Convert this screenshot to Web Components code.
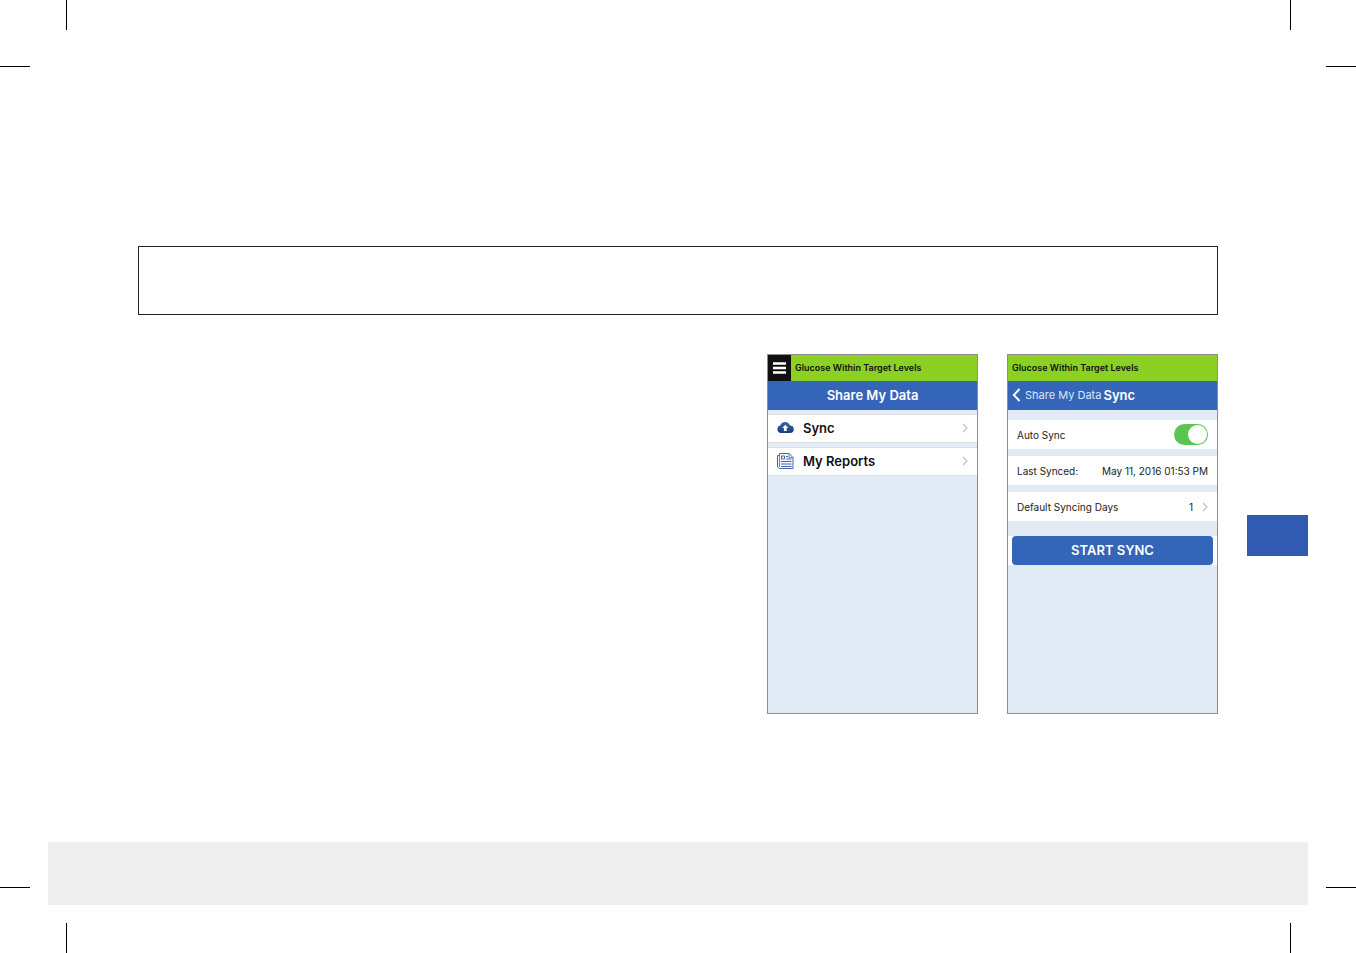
<!DOCTYPE html>
<html lang="en">
<head>
<meta charset="utf-8">
<meta name="viewport" content="width=device-width, initial-scale=1">
<title>Share My Data – Sync</title>
<style>
body { margin: 0; background: #fff; color: #111; font-family: Inter, "Liberation Sans", sans-serif;
  --blue: #3465b8; --green: #8bd023; --pale: #e2eaf5; }
</style>
</head>
<body>
<manual-page>
  <note-box></note-box>
  <figure-row>
    <phone-screen>
      <status-bar menu>Glucose Within Target Levels</status-bar>
      <nav-bar heading="Share My Data"></nav-bar>
      <menu-list>
        <menu-row icon="cloud">Sync</menu-row>
        <menu-row icon="report">My Reports</menu-row>
      </menu-list>
    </phone-screen>
    <phone-screen>
      <status-bar>Glucose Within Target Levels</status-bar>
      <nav-bar heading="Sync" back="Share My Data"></nav-bar>
      <sync-form></sync-form>
    </phone-screen>
    <chapter-tab></chapter-tab>
  </figure-row>
  <page-footer slot="footer"></page-footer>
</manual-page>
<script>
const define = (name, css, html) => customElements.define(name, class extends HTMLElement {
  constructor() { super(); this.attachShadow({ mode: 'open' }); }
  connectedCallback() {
    this.shadowRoot.innerHTML = `<style>*{box-sizing:border-box}:host{display:block;box-sizing:border-box}${css}</style>` +
      (typeof html === 'function' ? html(this) : html);
  }
});
const chevron = '<svg class="chev" width="6" height="10" viewBox="0 0 6 10" fill="none" stroke="#bfc1c6" stroke-width="1.2" aria-hidden="true"><path d="M1 1l4 4-4 4"/></svg>';
const icons = {
  cloud: `<svg width="17" height="13" viewBox="0 0 17 13" aria-hidden="true"><defs><linearGradient id="c" x2="0" y2="1"><stop stop-color="#3262b2"/><stop offset="1" stop-color="#1d3c7c"/></linearGradient></defs><path fill="url(#c)" d="M4 12a3.8 3.8 0 0 1-.6-7.5C3.700 2.400 5.700 1 8 1c2.400 0 4.200 1.300 4.900 3.400A3.800 3.800 0 0 1 13 12Z"/><path fill="#fff" d="M8.300 3.700l3.100 3.300H9.700V10H6.900V7H5.200Z"/></svg>`,
  report: `<svg width="17" height="16" viewBox="0 0 17 16" fill="none" stroke="#4468ae" aria-hidden="true"><path fill="#f4f7fd" d="M2.500.5H12l4 4v11H2.500l-2-1.500V2.500h2Z"/><path d="M2.500 2.500V14M12 .5v4h4" stroke-opacity=".8"/><path d="M4.500 3h3v3h-3ZM9 3.500h2M9 6h5.500M4 8.500h10.500M4 11h10.500M4 13.500h10.500"/></svg>`
};

define('manual-page', `
  :host{display:grid;min-height:100vh;grid-template:67px 1fr 66px / 67px 1fr 66px}
  main{grid-area:1/1/-1/-1;display:flex;flex-direction:column;padding:246px 48px 48px}
  footer{margin-top:auto}
  .m{--h:linear-gradient(#000,#000);background-image:var(--h),var(--h);background-repeat:no-repeat;background-size:30px 1px,1px 30px}
  .tl{grid-area:1/1;background-position:left bottom,right top}
  .tr{grid-area:1/3;background-position:right bottom,left top}
  .bl{grid-area:3/1;background-position:left top,right bottom}
  .br{grid-area:3/3;background-position:right top,left bottom}`,
  `<main><slot></slot><footer><slot name="footer"></slot></footer></main>
   <i class="m tl"></i><i class="m tr"></i><i class="m bl"></i><i class="m br"></i>`);
define('note-box', ':host{margin:0 90px;min-height:69px;border:1px solid #222}', '<slot></slot>');
define('figure-row', ':host{display:flex;justify-content:flex-end;align-items:flex-start;gap:29px;margin-top:39px}', '<slot></slot>');
define('chapter-tab', ':host{width:61px;height:41px;margin-top:161px;background:#315bb1}', '<slot></slot>');
define('page-footer', ':host{min-height:63px;background:#efefef}', '<slot></slot>');
define('phone-screen', ':host{width:211px;min-height:360px;border:1px solid #8e8e92;background:var(--pale)}', '<slot></slot>');
define('status-bar', `
  :host{display:flex;height:26px;background:var(--green);font-size:9px;font-weight:600;line-height:26px;white-space:nowrap}
  button{display:grid;place-items:center;width:23px;padding:0;border:0;background:#101010}
  span{padding-left:4px}`,
  el => (el.hasAttribute('menu') ? '<button type="button" aria-label="Menu"><svg width="13" height="12" viewBox="0 0 13 12" stroke="#fff" stroke-width="2.400"><path d="M0 1.500h13M0 6h13M0 10.500h13"/></svg></button>' : '') + '<span><slot></slot></span>');
define('nav-bar', `
  :host{display:flex;align-items:center;justify-content:center;height:29px;padding-bottom:1px;background:var(--blue);color:#fff;white-space:nowrap}
  :host([back]){justify-content:flex-start;padding-left:4px;gap:2px}
  a{display:flex;align-items:center;gap:4px;color:#dce6f7;font-size:11px;text-decoration:none}
  h2{margin:0;font-size:13px;font-weight:600;line-height:26px}`,
  el => (el.getAttribute('back') ? `<a href="#share"><svg width="9" height="14" viewBox="0 0 9 14" fill="none" stroke="#fff" stroke-width="2"><path d="M7.500 1L1.800 7l5.700 6"/></svg>${el.getAttribute('back')}</a>` : '') + `<h2>${el.getAttribute('heading')}</h2>`);
define('menu-list', ':host{display:grid;gap:4px;padding-top:4px}', '<slot></slot>');
define('menu-row', `
  a{display:flex;align-items:center;height:29px;padding:0 9px 2px;background:#fff;border:solid #dcdfe4;border-width:1px 0;color:#111;font-size:13px;font-weight:600;text-decoration:none}
  span{flex:1;padding-left:9px}`,
  el => `<a href="#${el.getAttribute('icon')}">${icons[el.getAttribute('icon')]}<span><slot></slot></span>${chevron}</a>`);
define('sync-form', `
  form{display:grid;gap:7px;padding-top:10px;font-size:10px}
  .row{display:flex;align-items:center;justify-content:space-between;height:29px;padding:0 9px;background:#fff;color:#1b1b1b;white-space:nowrap}
  input{appearance:none;width:34px;height:21px;margin:0;padding:1px;border-radius:11px;background:#5cc453;display:flex;justify-content:flex-end}
  input::before{content:"";width:19px;height:19px;border-radius:50%;background:#fff}
  input:not(:checked){justify-content:flex-start;background:#ccc}
  a{color:inherit;text-decoration:none}
  .val{display:flex;align-items:center;gap:9px}
  .act{margin-top:8px;padding:0 4px;background:#fff}
  button{display:block;width:100%;height:29px;padding:0;border:0;border-radius:4px;background:var(--blue);color:#fff;font:600 13px/29px Inter,"Liberation Sans",sans-serif}`,
  `<form><label class="row">Auto Sync<input type="checkbox" role="switch" checked></label>
   <div class="row"><span>Last Synced:</span><time datetime="2016-05-11T13:53">May 11, 2016 01:53 PM</time></div>
   <a class="row" href="#days"><span>Default Syncing Days</span><span class="val">1${chevron}</span></a>
   <div class="act"><button type="button">START SYNC</button></div></form>`);
</script>
</body>
</html>
